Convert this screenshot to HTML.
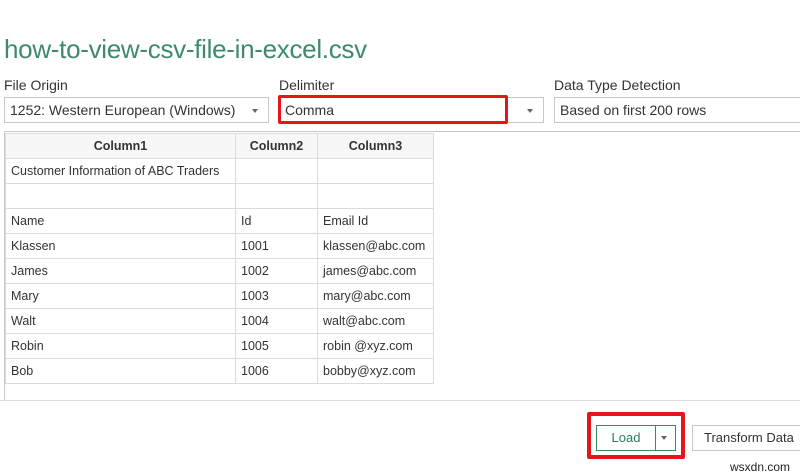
<!DOCTYPE html>
<html><head><meta charset="utf-8"><style>
body{margin:0;width:800px;height:475px;background:#fff;font-family:"Liberation Sans",sans-serif;position:relative;overflow:hidden;color:#333}
.a{position:absolute}
.title{left:4px;top:34px;font-size:26px;color:#3f8a68;letter-spacing:-0.3px}
.lbl{font-size:14px;color:#333;top:77px}
.sel{top:97px;height:26px;border:1px solid #c8c8c8;box-sizing:border-box;font-size:14px;line-height:24px;padding-left:5px;background:#fff}
.arr{position:absolute;right:8px;top:11px;width:0;height:0;border-left:3px solid transparent;border-right:3px solid transparent;border-top:4px solid #666}
table{border-collapse:collapse;font-size:12.5px;table-layout:fixed}
td,th{border:1px solid #dcdcdc;height:24px;padding:0 0 0 5px;text-align:left;white-space:nowrap;overflow:hidden}
th{text-align:center;font-weight:bold;background:#f7f7f7;padding:0}
</style></head><body>
<div class="a title">how-to-view-csv-file-in-excel.csv</div>
<div class="a lbl" style="left:4px">File Origin</div>
<div class="a lbl" style="left:279px">Delimiter</div>
<div class="a lbl" style="left:554px">Data Type Detection</div>
<div class="a sel" style="left:4px;width:265px">1252: Western European (Windows)<span class="arr" style="right:10px"></span></div>
<div class="a sel" style="left:279px;width:265px">Comma<span class="arr" style="right:10px"></span></div>
<div class="a" style="left:278px;top:95px;width:230px;height:29px;border:3px solid #e8141c;box-sizing:border-box;border-radius:2px"></div>
<div class="a sel" style="left:554px;width:260px">Based on first 200 rows</div>
<div class="a" style="left:4px;top:131px;width:800px;height:270px;border:1px solid #c8c8c8;box-sizing:border-box"></div>
<table class="a" style="left:5px;top:133px;width:428px">
<colgroup><col style="width:230px"><col style="width:82px"><col style="width:116px"></colgroup>
<tr><th>Column1</th><th>Column2</th><th>Column3</th></tr>
<tr><td>Customer Information of ABC Traders</td><td></td><td></td></tr>
<tr><td></td><td></td><td></td></tr>
<tr><td>Name</td><td>Id</td><td>Email Id</td></tr>
<tr><td>Klassen</td><td>1001</td><td>klassen@abc.com</td></tr>
<tr><td>James</td><td>1002</td><td>james@abc.com</td></tr>
<tr><td>Mary</td><td>1003</td><td>mary@abc.com</td></tr>
<tr><td>Walt</td><td>1004</td><td>walt@abc.com</td></tr>
<tr><td>Robin</td><td>1005</td><td>robin @xyz.com</td></tr>
<tr><td>Bob</td><td>1006</td><td>bobby@xyz.com</td></tr>
</table>
<div class="a" style="left:0;top:400px;width:800px;height:1px;background:#ddd"></div>
<div class="a" style="left:587px;top:412px;width:98px;height:47px;border:4px solid #e8141c;box-sizing:border-box;border-radius:2px"></div>
<div class="a" style="left:596px;top:425px;width:80px;height:26px;border:1px solid #3a8a5f;box-sizing:border-box;font-size:13px;color:#2e7d5b">
<span class="a" style="left:0;width:58px;text-align:center;line-height:24px">Load</span>
<span class="a" style="left:58px;top:0;width:1px;height:24px;background:#3a8a5f"></span>
<span class="a" style="left:64px;top:10px;border-left:3px solid transparent;border-right:3px solid transparent;border-top:4px solid #666"></span></div>
<div class="a" style="left:692px;top:425px;width:110px;height:26px;border:1px solid #c8c8c8;box-sizing:border-box;font-size:13px;line-height:24px;padding-left:11px">Transform Data</div>
<div class="a" style="left:730px;top:460px;font-size:12px;color:#222">wsxdn.com</div>
</body></html>
